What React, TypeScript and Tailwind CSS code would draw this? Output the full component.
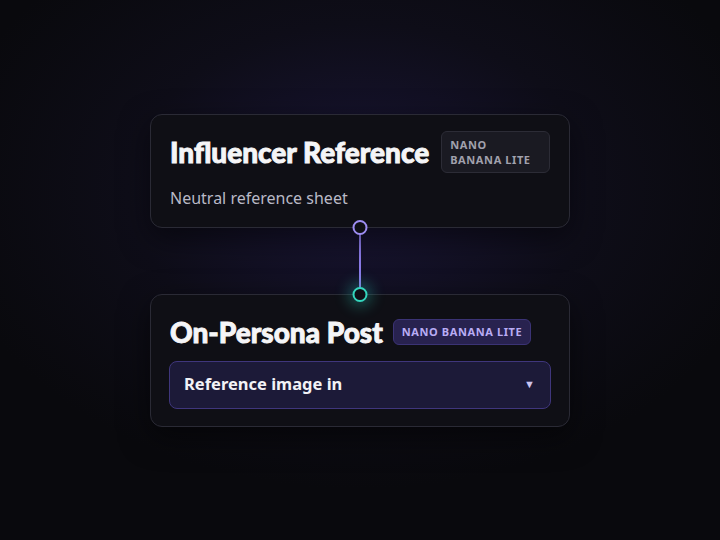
export default function App() {
  return (
    <div
      className="relative flex h-[540px] w-[720px] flex-col items-center justify-center overflow-hidden bg-[#09090d]"
      style={{ fontFamily: '"Noto Sans", "Open Sans", sans-serif' }}
    >
      <div className="pointer-events-none absolute inset-0 bg-[radial-gradient(ellipse_420px_300px_at_50%_35%,#191536_0%,#0e0d18_55%,#09090d_100%)]" />

      <div className="relative flex flex-col items-stretch">
        <div className="relative w-[420px] rounded-xl border border-[#2a2a35] bg-[#0f0f15] px-[18px] pb-[17px] pt-4 shadow-[0_10px_30px_rgba(0,0,0,0.5)]">
          <div className="flex items-center gap-[12px] pl-[1px]">
            <h2 className="whitespace-nowrap font-['Lato',sans-serif] text-[28px] font-black leading-[38px] text-[#f5f5f7] [-webkit-text-stroke:0.9px_#f5f5f7]">
              Influencer Reference
            </h2>
            <span className="rounded-md border border-[#2c2c36] bg-[#1a1a22] py-[5px] pl-2 pr-[18px] text-[11px] font-bold leading-[15px] tracking-[0.6px] text-[#a1a1ad]">
              NANO
              <br />
              <span className="whitespace-nowrap">BANANA LITE</span>
            </span>
          </div>
          <p className="mt-[13px] pl-[1px] text-[16px] leading-6 text-[#b9b9c6]">Neutral reference sheet</p>
          <span className="absolute bottom-[-8px] left-1/2 z-10 h-[15px] w-[15px] -translate-x-1/2 rounded-full border-2 border-[#9d8df1] bg-[#0f0f15]" />
        </div>

        <div className="flex h-[66px] justify-center">
          <div className="w-[2px] bg-[#8b7be8]" />
        </div>

        <div className="relative w-[420px] rounded-xl border border-[#2a2a35] bg-[#0f0f15] px-[18px] pb-[17px] pt-[21px] shadow-[0_10px_30px_rgba(0,0,0,0.5)]">
          <span className="absolute top-[-8px] left-1/2 z-10 h-[15px] w-[15px] -translate-x-1/2 rounded-full border-2 border-[#34d6bd] bg-[#0f0f15] shadow-[0_0_14px_5px_rgba(45,212,191,0.3)]" />
          <div className="flex items-center gap-[10px] pl-[1px]">
            <h2 className="whitespace-nowrap font-['Lato',sans-serif] text-[28px] font-black leading-[32px] text-[#f5f5f7] [-webkit-text-stroke:0.9px_#f5f5f7]">
              On-Persona Post
            </h2>
            <span className="rounded-md border border-[#3b3375] bg-[#28224f] px-2 py-[4px] text-[11px] font-bold leading-4 tracking-[0.6px] text-[#b9acf5]">
              NANO BANANA LITE
            </span>
          </div>
          <div className="mt-[13px] flex h-12 items-center justify-between rounded-lg border border-[#3f367c] bg-[#1c1a38] pl-[14px] pr-[15px]">
            <span className="text-[16.5px] font-bold text-[#f2f2f6]">Reference image in</span>
            <span className="text-[11px] text-[#c9c4ef]">▼</span>
          </div>
        </div>
      </div>
    </div>
  );
}
